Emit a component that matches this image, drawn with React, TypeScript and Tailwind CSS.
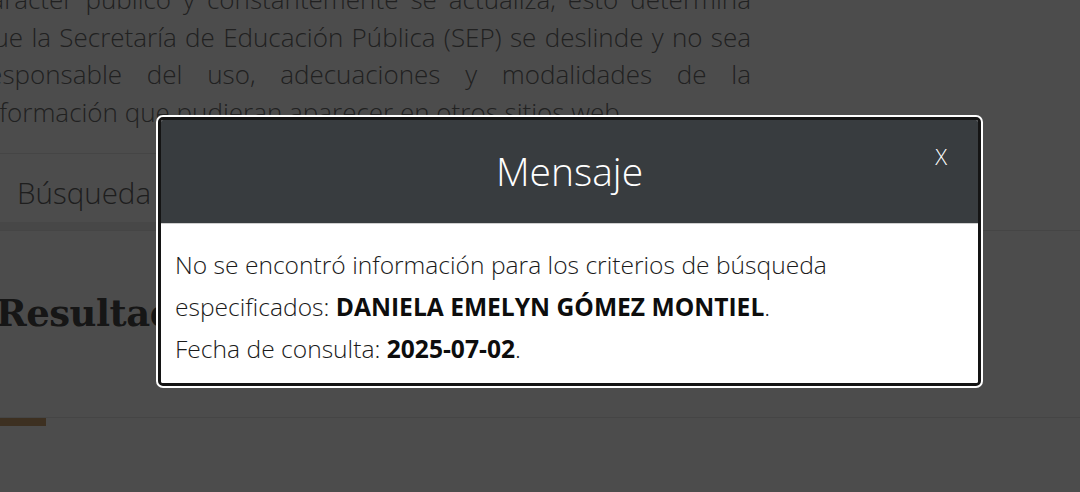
// Texto de aviso que aparece arriba del buscador
const avisoLineas = [
  "carácter público y constantemente se actualiza, esto determina",
  "que la Secretaría de Educación Pública (SEP) se deslinde y no sea",
  "responsable del uso, adecuaciones y modalidades de la",
];

function Pagina() {
  return (
    <div className="flex flex-col">
      <div className="ml-[-22px] mt-[-19px] w-[773px] text-[26px] leading-[37.5px] font-light text-[#6e6e6e]">
        {avisoLineas.map((linea) => (
          <p key={linea} className="whitespace-nowrap text-justify [text-align-last:justify]">
            {linea}
          </p>
        ))}
        <p className="whitespace-nowrap">información que pudieran aparecer en otros sitios web.</p>
      </div>

      <div className="mt-[22px] border-b border-[#e6e6e6]">
        <div className="w-[420px] border-t border-[#e6e6e6] border-b-[8px] border-b-[#efefef]">
          <div className="h-[68px] pl-[17px] pt-[11px] flex items-center text-[29.5px] font-light text-[#666]">
            Búsqueda
          </div>
        </div>
      </div>

      <h2 className="ml-[-4px] mt-[56px] font-['DejaVu_Serif',serif] text-[37px] font-bold leading-[52px] tracking-[-0.5px] text-[#4a4a4a]">
        Resultados
      </h2>

      <div className="mt-[78px] border-t border-[#e6e6e6]">
        <div className="h-[8px] w-[46px] bg-[#cba071]" />
      </div>
    </div>
  );
}

function Mensaje() {
  return (
    <div className="w-[827px] rounded-[7px] bg-white p-[2px]">
      <div className="overflow-hidden rounded-[5px] border-[3px] border-[#141414]">
        <div className="relative flex h-[104px] items-center justify-center border-b border-[#cfcfcf] bg-[#383c3f]">
          <h3 className="text-[39px] font-light text-white">Mensaje</h3>
          <button className="absolute right-[31px] top-[20px] text-[22px] font-light text-white">
            X
          </button>
        </div>
        <div className="bg-white px-[14px] pb-[13px] pt-[20px] text-[24.6px] leading-[42px] font-light text-[#1a1a1a]">
          No se encontró información para los criterios de búsqueda especificados:{" "}
          <strong className="font-bold text-[#0d0d0d]">DANIELA EMELYN GÓMEZ MONTIEL</strong>.
          <br />
          Fecha de consulta: <strong className="font-bold text-[#0d0d0d]">2025-07-02</strong>.
        </div>
      </div>
    </div>
  );
}

export default function App() {
  return (
    <div className="relative h-[492px] w-[1080px] overflow-hidden bg-white font-['Open_Sans',sans-serif]">
      <Pagina />
      <div className="absolute inset-0 bg-black/70 pl-[156px] pt-[115px]">
        <Mensaje />
      </div>
    </div>
  );
}
